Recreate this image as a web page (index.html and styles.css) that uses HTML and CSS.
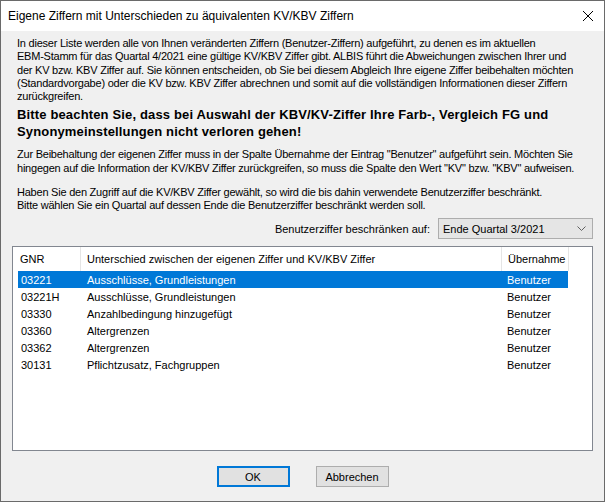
FILE: index.html
```html
<!DOCTYPE html>
<html lang="de">
<head>
    <meta charset="UTF-8">
    <meta name="viewport" content="width=device-width, initial-scale=1.0">
    <title>Eigene Ziffern</title>
    <link rel="stylesheet" href="styles.css">
</head>
<body>
<div class="window">
    <div class="titlebar">
        <span class="title">Eigene Ziffern mit Unterschieden zu äquivalenten KV/KBV Ziffern</span>
        <svg class="close" width="12" height="12" viewBox="0 0 12 12">
            <path d="M1 1 L11 11 M11 1 L1 11" stroke="#000" stroke-width="1" fill="none"/>
        </svg>
    </div>

    <div class="content">
        <p class="info">In dieser Liste werden alle von Ihnen veränderten Ziffern (Benutzer-Ziffern) aufgeführt, zu denen es im aktuellen<br>EBM-Stamm für das Quartal 4/2021 eine gültige KV/KBV Ziffer gibt. ALBIS führt die Abweichungen zwischen Ihrer und<br>der KV bzw. KBV Ziffer auf. Sie können entscheiden, ob Sie bei diesem Abgleich Ihre eigene Ziffer beibehalten möchten<br>(Standardvorgabe) oder die KV bzw. KBV Ziffer abrechnen und somit auf die vollständigen Informationen dieser Ziffern<br>zurückgreifen.</p>

        <p class="warning">Bitte beachten Sie, dass bei Auswahl der KBV/KV-Ziffer Ihre Farb-, Vergleich FG und<br>Synonymeinstellungen nicht verloren gehen!</p>

        <p class="info gap-s">Zur Beibehaltung der eigenen Ziffer muss in der Spalte Übernahme der Eintrag "Benutzer" aufgeführt sein. Möchten Sie<br>hingegen auf die Information der KV/KBV Ziffer zurückgreifen, so muss die Spalte den Wert "KV" bzw. "KBV" aufweisen.</p>

        <p class="info gap-m">Haben Sie den Zugriff auf die KV/KBV Ziffer gewählt, so wird die bis dahin verwendete Benutzerziffer beschränkt.<br>Bitte wählen Sie ein Quartal auf dessen Ende die Benutzerziffer beschränkt werden soll.</p>

        <div class="limit-row">
            <span class="limit-label">Benutzerziffer beschränken auf:</span>
            <div class="combo">
                <span>Ende Quartal 3/2021</span>
                <svg class="chevron" width="9" height="5" viewBox="0 0 9 5">
                    <path d="M0.5 0.5 L4.5 4.5 L8.5 0.5" stroke="#606060" stroke-width="1" fill="none"/>
                </svg>
            </div>
        </div>

        <div class="listview">
            <div class="lv-head">
                <span class="col-gnr">GNR</span>
                <span class="col-diff">Unterschied zwischen der eigenen Ziffer und KV/KBV Ziffer</span>
                <span class="col-take">Übernahme</span>
            </div>
            <div class="lv-row selected"><span>03221</span><span>Ausschlüsse, Grundleistungen</span><span>Benutzer</span></div>
            <div class="lv-row"><span>03221H</span><span>Ausschlüsse, Grundleistungen</span><span>Benutzer</span></div>
            <div class="lv-row"><span>03330</span><span>Anzahlbedingung hinzugefügt</span><span>Benutzer</span></div>
            <div class="lv-row"><span>03360</span><span>Altergrenzen</span><span>Benutzer</span></div>
            <div class="lv-row"><span>03362</span><span>Altergrenzen</span><span>Benutzer</span></div>
            <div class="lv-row"><span>30131</span><span>Pflichtzusatz, Fachgruppen</span><span>Benutzer</span></div>
        </div>

        <div class="buttons">
            <button class="btn default">OK</button>
            <button class="btn">Abbrechen</button>
        </div>
    </div>
</div>
</body>
</html>
```

FILE: styles.css
```css
html, body {
    margin: 0;
    padding: 0;
}

body {
    font-family: "Liberation Sans", Arial, sans-serif;
    font-size: 11px;
    color: #000;
    background: #f0f0f0;
}

.window {
    width: 605px;
    height: 502px;
    box-sizing: border-box;
    border: 1px solid #6a6a6a;
    background: #f0f0f0;
    display: flex;
    flex-direction: column;
}

/* title bar */
.titlebar {
    height: 30px;
    background: #fff;
    display: flex;
    align-items: center;
    justify-content: space-between;
    padding: 0 10px 0 7px;
}

.title {
    font-size: 12px;
}

.close {
    display: block;
}

/* dialog body */
.content {
    flex: 1;
    padding: 6px 11px 0 11px;
}

.info {
    margin: 0 0 0 5px;
    line-height: 13.25px;
    letter-spacing: -0.23px;
}

.warning {
    margin: 3px 0 0 5px;
    font-size: 13px;
    font-weight: bold;
    line-height: 17px;
    letter-spacing: 0.15px;
}

.gap-s {
    margin-top: 8px;
}

.gap-m {
    margin-top: 11px;
}

.limit-row {
    display: flex;
    justify-content: flex-end;
    align-items: center;
    gap: 8px;
    margin-top: 6px;
}

.combo {
    width: 155px;
    height: 21px;
    box-sizing: border-box;
    border: 1px solid #adadad;
    background: #e5e5e5;
    display: flex;
    align-items: center;
    justify-content: space-between;
    padding: 0 6px 0 4px;
}

/* list view */
.listview {
    margin-top: 7px;
    height: 205px;
    box-sizing: border-box;
    border: 1px solid #828790;
    background: #fff;
}

.lv-head {
    display: grid;
    grid-template-columns: 67px 421px 68px;
    height: 24px;
    align-items: stretch;
}

.lv-head span {
    display: flex;
    align-items: center;
    padding-left: 7px;
}

.lv-head .col-diff,
.lv-head .col-take {
    border-left: 1px solid #e5e5e5;
    padding-left: 6px;
}

.lv-head .col-take {
    border-right: 1px solid #e5e5e5;
}

.lv-row {
    display: grid;
    grid-template-columns: 62px 420px 68px;
    width: 550px;
    height: 17px;
    margin-left: 5px;
    align-items: center;
}

.lv-row span {
    padding-left: 7px;
}

.lv-row span:first-child {
    padding-left: 3px;
}

.lv-row.selected {
    background: #0078d7;
    color: #fff;
}

/* buttons */
.buttons {
    display: flex;
    justify-content: center;
    gap: 26px;
    margin-top: 15px;
}

.btn {
    width: 73px;
    height: 21px;
    box-sizing: border-box;
    border: 1px solid #adadad;
    background: #e1e1e1;
    font-family: "Liberation Sans", Arial, sans-serif;
    font-size: 11px;
    color: #000;
    padding: 0;
    margin: 0;
}

.btn.default {
    border: 2px solid #0078d7;
}
```
